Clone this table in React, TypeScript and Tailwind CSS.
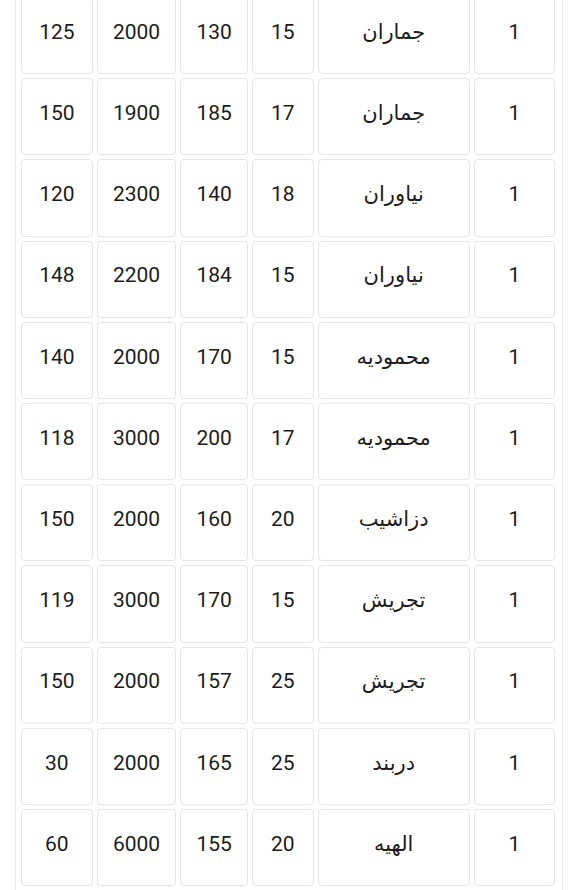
import React from "react";

const rows: [string, string, string, string, string, string][] = [
	["1", "جماران", "15", "130", "2000", "125"],
	["1", "جماران", "17", "185", "1900", "150"],
	["1", "نیاوران", "18", "140", "2300", "120"],
	["1", "نیاوران", "15", "184", "2200", "148"],
	["1", "محمودیه", "15", "170", "2000", "140"],
	["1", "محمودیه", "17", "200", "3000", "118"],
	["1", "دزاشیب", "20", "160", "2000", "150"],
	["1", "تجریش", "15", "170", "3000", "119"],
	["1", "تجریش", "25", "157", "2000", "150"],
	["1", "دربند", "25", "165", "2000", "30"],
	["1", "الهیه", "20", "155", "6000", "60"]
];

const widths = ["w-[82px]", "w-[153px]", "w-[62px]", "w-[68px]", "w-[80px]", "w-[72px]"];

const App: React.FC = () => {
	return (
		<div className="min-h-screen bg-white overflow-hidden">
			<div
				dir="rtl"
				className="ml-[15px] w-[548px] -mt-[7px] border-x border-[#ebebeb] pr-[3px] pl-[1px] font-['Roboto','DejaVu_Sans',sans-serif] text-[21px] text-[#1c1c1c]"
			>
				<table className="table-fixed border-separate border-spacing-x-[4px] border-spacing-y-[4px]">
					<tbody>
						{rows.map((row, i) => (
							<tr key={i}>
								{row.map((cell, j) => (
									<td
										key={j}
										className={`${widths[j]} h-[77.2px] pb-[6px] border border-[#e6e6e6] rounded-[4px] text-center align-middle`}
									>
										{cell}
									</td>
								))}
							</tr>
						))}
					</tbody>
				</table>
			</div>
		</div>
	);
};

export default App;
